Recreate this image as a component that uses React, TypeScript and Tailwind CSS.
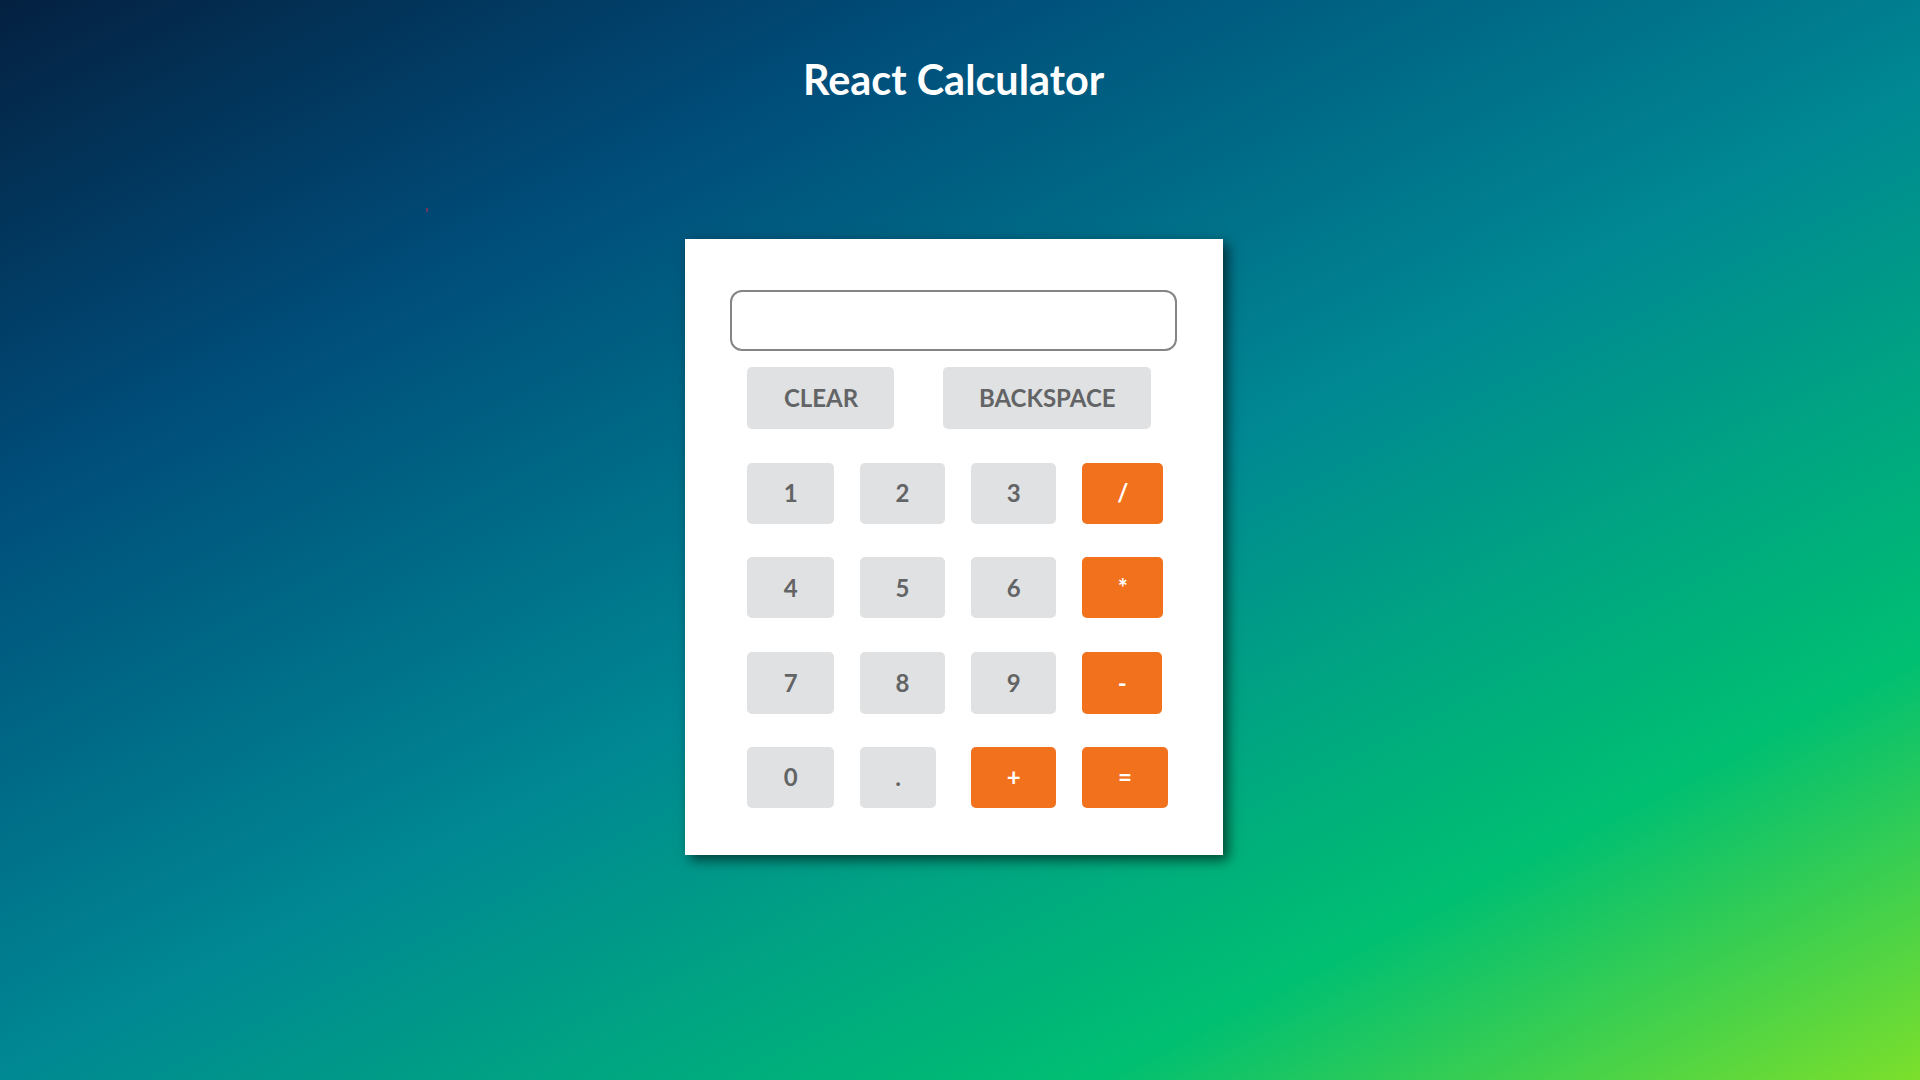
const gray = "bg-[#e0e1e2] text-[#636465]";
const orange = "bg-[#f2711c] text-white";

type Key = { label: string; tone: string; size: string };

const rows: { top: string; keys: Key[] }[] = [
  {
    top: "mt-4 h-[62px]",
    keys: [
      { label: "CLEAR", tone: gray, size: "w-[147px]" },
      { label: "BACKSPACE", tone: gray, size: "ml-[49px] w-[207.5px]" },
    ],
  },
  {
    top: "mt-[34px] h-[61px]",
    keys: [
      { label: "1", tone: gray, size: "w-[86.5px] pb-0.5" },
      { label: "2", tone: gray, size: "ml-[26px] w-[85px] pb-0.5" },
      { label: "3", tone: gray, size: "ml-[26px] w-[85.5px] pb-0.5" },
      { label: "/", tone: orange, size: "ml-[25.5px] w-[81.5px] pb-0.5" },
    ],
  },
  {
    top: "mt-[33px] h-[61px]",
    keys: [
      { label: "4", tone: gray, size: "w-[86.5px]" },
      { label: "5", tone: gray, size: "ml-[26px] w-[85px]" },
      { label: "6", tone: gray, size: "ml-[26px] w-[85.5px]" },
      { label: "*", tone: orange, size: "ml-[25.5px] w-[81.5px]" },
    ],
  },
  {
    top: "mt-[33.5px] h-[62px]",
    keys: [
      { label: "7", tone: gray, size: "w-[86.5px]" },
      { label: "8", tone: gray, size: "ml-[26px] w-[85px]" },
      { label: "9", tone: gray, size: "ml-[26px] w-[85.5px]" },
      { label: "-", tone: orange, size: "ml-[25.5px] w-[80.5px]" },
    ],
  },
  {
    top: "mt-[33px] h-[61.5px]",
    keys: [
      { label: "0", tone: gray, size: "w-[86.5px]" },
      { label: ".", tone: gray, size: "ml-[26px] w-[76px]" },
      { label: "+", tone: orange, size: "ml-[35px] w-[85.5px]" },
      { label: "=", tone: orange, size: "ml-[25.5px] w-[86px]" },
    ],
  },
];

export default function App() {
  return (
    <div className="relative flex h-[1080px] w-[1920px] flex-col overflow-hidden bg-[linear-gradient(152.8deg,#051937_-75px,#004d7a_437px,#008793_949px,#00bf72_1461px,#a8eb12_1973px)] font-['Lato',sans-serif]">
      <span className="absolute top-[208px] left-[426px] h-[4px] w-[2px] bg-[#6f3560]" />
      <h1 className="mt-[53px] ml-[803px] h-[52px] text-[41.4px] leading-[52px] font-bold whitespace-nowrap text-white">
        React Calculator
      </h1>
      <main className="mt-[134px] ml-[685px] h-[616px] w-[538px] bg-white pt-[51px] pl-[45px] shadow-[5px_5px_12px_rgba(0,0,0,0.6)]">
        <input
          readOnly
          aria-label="Display"
          className="block h-[61px] w-[447px] rounded-[12px] border-2 border-[#858585] bg-white px-4 text-2xl outline-none"
        />
        <div className="pl-[17px]">
          {rows.map((row, i) => (
            <div key={i} className={`flex ${row.top}`}>
              {row.keys.map((key) => (
                <button
                  key={key.label}
                  className={`flex items-center justify-center rounded-[5px] pl-px text-[24px] leading-none font-bold ${key.tone} ${key.size}`}
                >
                  {key.label}
                </button>
              ))}
            </div>
          ))}
        </div>
      </main>
    </div>
  );
}
